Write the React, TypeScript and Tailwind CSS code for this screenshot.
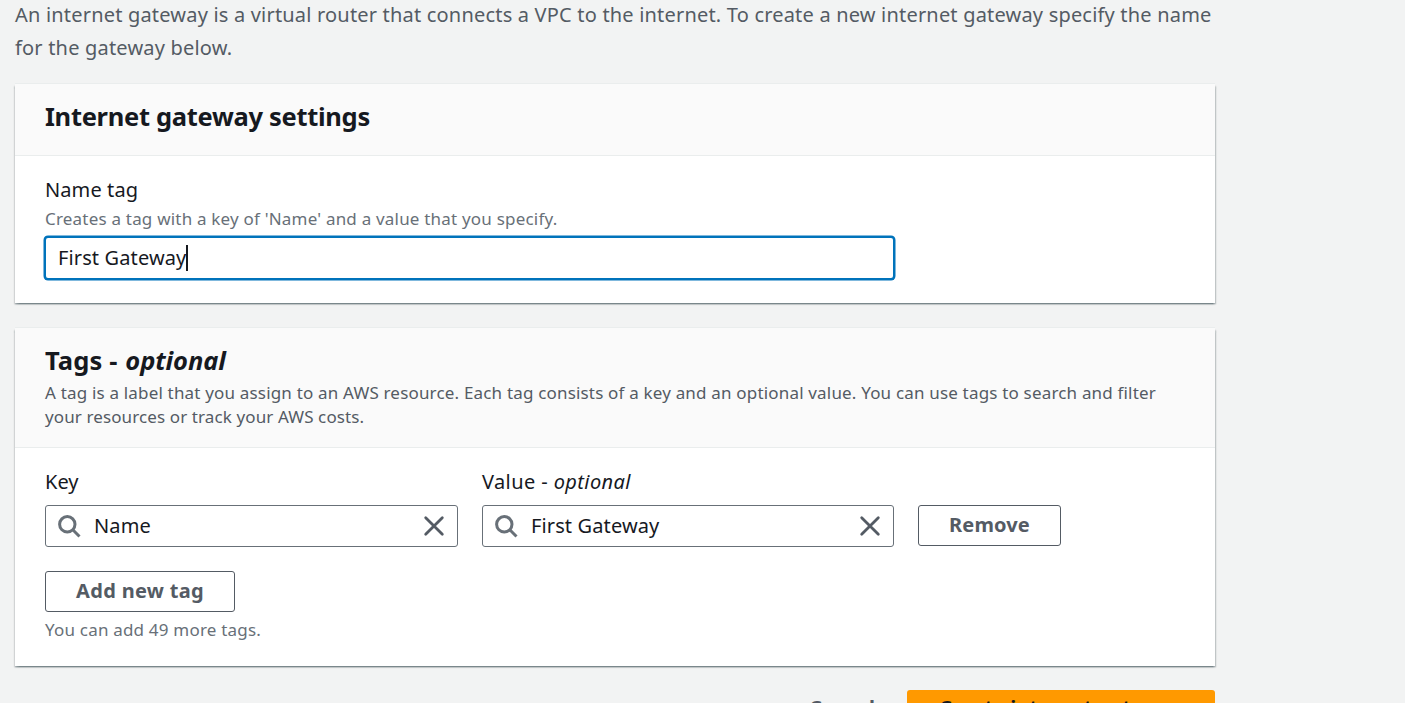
import type { ReactNode } from "react";

function SearchIcon() {
  return (
    <svg width="24" height="24" viewBox="0 0 24 24" fill="none" stroke="#687078" strokeWidth="3" className="-ml-px mr-px shrink-0">
      <circle cx="10.3" cy="10.3" r="7.7" />
      <path d="M15.8 15.8l6.7 6.7" />
    </svg>
  );
}

function CloseIcon() {
  return (
    <svg width="24" height="24" viewBox="0 0 24 24" fill="none" stroke="#545b64" strokeWidth="2.8" strokeLinecap="round" className="shrink-0">
      <path d="M3.7 3.7l16.6 16.6M20.3 3.7l-16.6 16.6" />
    </svg>
  );
}

function Card({ header, headerClass, className, children }: { header: ReactNode; headerClass: string; className: string; children: ReactNode }) {
  return (
    <section
      className={`w-[1200px] bg-white shadow-[0_-1px_0_0_#eaeded,0_1.5px_1.5px_0_rgba(0,28,36,0.3),1.5px_1.5px_1.5px_0_rgba(0,28,36,0.15),-1.5px_1.5px_1.5px_0_rgba(0,28,36,0.15)] ${className}`}
    >
      <header className={`border-b border-[#eaeded] bg-[#fafafa] px-[30px] ${headerClass}`}>{header}</header>
      <div className="px-[30px]">{children}</div>
    </section>
  );
}

function TagField({ value, width }: { value: string; width: string }) {
  return (
    <div className={`mt-2 flex h-[42px] items-center rounded-[3px] border border-[#687078] bg-white pr-[11px] pl-3 ${width}`}>
      <SearchIcon />
      <span className="ml-3 flex-1 text-[20px] leading-[30px] tracking-[0.12px]">{value}</span>
      <CloseIcon />
    </div>
  );
}

export default function App() {
  return (
    <main className="h-[703px] overflow-hidden bg-[#f2f3f3] pl-[15px] font-['Noto_Sans',sans-serif] whitespace-nowrap text-[#16191f]">
      <p className="-mt-[2px] h-[86px] text-[20px] leading-[33px] tracking-[0.19px] text-[#545b64]">
        <span>An internet gateway is a virtual router that connects a VPC to the internet. To create a new internet gateway specify the name</span>
        <br />
        <span>for the gateway below.</span>
      </p>

      <Card
        className="h-[219px]"
        headerClass="h-[72px] pt-[14px]"
        header={<h2 className="text-[25.5px] leading-[36px] font-bold tracking-[-0.3px]">Internet gateway settings</h2>}
      >
        <div className="pt-[19px] text-[20px] leading-[30px] tracking-[0.1px]">Name tag</div>
        <div className="text-[17px] leading-[27px] tracking-[0.2px] text-[#687078]">
          <span>Creates a tag with a key of 'Name' and a value that you specify.</span>
        </div>
        <div className="mt-1 -ml-px flex h-[44px] w-[851px] items-center rounded-[4px] border-2 border-[#0073bb] bg-white pl-3 shadow-[0_0_0_0.5px_#0073bb]">
          <span className="text-[20px] tracking-[0.12px]">First Gateway</span>
          <span className="h-[26px] w-[2px] bg-[#16191f]" />
        </div>
      </Card>

      <Card
        className="mt-[25px] h-[338px]"
        headerClass="h-[120px] pt-[14px]"
        header={
          <>
            <h2 className="text-[25.5px] leading-[36px] font-bold tracking-[0.15px]">
              Tags - <em className="ml-px tracking-[-0.1px]">optional</em>
            </h2>
            <p className="mt-[3px] text-[17px] leading-6 tracking-[0.18px] text-[#545b64]">
              <span>A tag is a label that you assign to an AWS resource. Each tag consists of a key and an optional value. You can use tags to search and filter</span>
              <br />
              <span className="tracking-[0.11px]">your resources or track your AWS costs.</span>
            </p>
          </>
        }
      >
        <div className="flex pt-[19px]">
          <div className="w-[437px]">
            <div className="text-[20px] leading-[30px]">Key</div>
            <TagField value="Name" width="w-[413px]" />
          </div>
          <div className="w-[436px]">
            <div className="text-[20px] leading-[30px] tracking-[0.4px]">
              Value - <em>optional</em>
            </div>
            <TagField value="First Gateway" width="w-[412px]" />
          </div>
          <button className="mt-[38px] h-[41px] w-[143px] rounded-[3px] border border-[#545b64] bg-white pb-[2px] text-[20px] leading-[30px] font-bold tracking-[0.15px] text-[#545b64]">
            Remove
          </button>
        </div>
        <button className="mt-6 block h-[41px] w-[190px] rounded-[3px] border border-[#545b64] bg-white pb-[2px] text-[20px] leading-[30px] font-bold tracking-[0.3px] text-[#545b64]">
          Add new tag
        </button>
        <div className="mt-[6px] text-[17px] leading-6 tracking-[0.2px] text-[#687078]">
          <span>You can add 49 more tags.</span>
        </div>
      </Card>

      <div className="mt-6 flex w-[1200px] justify-end text-[20px] leading-[30px] font-bold">
        <button className="h-[41px] w-[130px] pb-[5px] text-[#545b64]">Cancel</button>
        <button className="h-[41px] w-[308px] rounded-[3px] bg-[#ff9900] pb-[5px] text-[#16191f]">Create internet gateway</button>
      </div>
    </main>
  );
}
